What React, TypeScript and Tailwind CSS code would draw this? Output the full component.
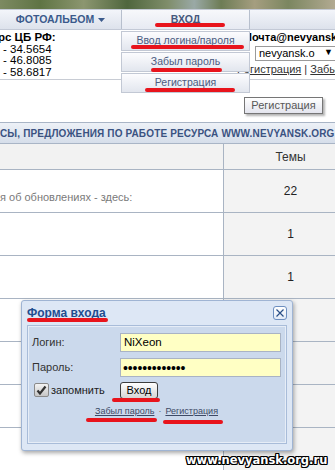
import React from "react";

const marks = [
  "left-[155px] top-[23px] w-[70px]",
  "left-[131px] top-[45px] w-[113px]",
  "left-[151px] top-[68px] w-[71px]",
  "left-[145px] top-[88px] w-[90px]",
  "left-[27px] top-[318px] w-[81px]",
  "left-[112px] top-[398px] w-[48px]",
  "left-[86px] top-[418px] w-[71px]",
  "left-[163px] top-[420px] w-[60px]",
];

const rows = [
  { note: "я об обновлениях - здесь:", count: "22" },
  { note: "", count: "1" },
  { note: "", count: "1" },
  { note: "", count: "" },
  { note: "", count: "" },
  { note: "", count: "" },
  { note: "", count: "" },
];

const Row = ({ note, count }: { note: string; count: string }) => (
  <div className="grid h-[43px] grid-cols-[223px_134px] border-b border-[#a9b4c3]">
    <div className="bg-white pt-[21px] text-[11px] leading-[13px] text-[#7a7a7a] whitespace-nowrap">{note}</div>
    <div className="flex items-center justify-center border-l border-[#a9b4c3] bg-[#f3f3f3] text-[12px] text-[#222]">
      {count}
    </div>
  </div>
);

export default function App() {
  return (
    <div className="relative h-[470px] w-[335px] overflow-hidden bg-white font-['Liberation_Sans',Arial,sans-serif] text-[11px] text-black">
      {/* photo strip */}
      <div className="h-[9px] bg-[linear-gradient(90deg,#7d8a62,#5f7444_12%,#8c9670_25%,#4f663d_38%,#7f8d6a_50%,#9aa9a6_58%,#6d7c55_66%,#a59e80_76%,#7b8660_86%,#b2aa92)]" />

      {/* nav */}
      <div className="flex h-[21px] border-y border-[#c3c9d6] bg-gradient-to-b from-[#f3f5fa] to-[#dde2ec]">
        <div className="flex w-[121px] shrink-0 items-center justify-center gap-[4px] text-[10.5px] font-bold text-[#3b5a8c]">
          ФОТОАЛЬБОМ
          <svg width="7" height="4" viewBox="0 0 7 4">
            <path d="M0 0h7L3.5 4z" fill="#3b5a8c" />
          </svg>
        </div>
        <div className="flex w-[129px] shrink-0 items-center justify-center border-x border-[#b7bfcd] bg-gradient-to-b from-[#f7f8fb] to-[#e7eaf2] text-[10.5px] font-bold text-[#46587c]">
          ВХОД
        </div>
        <div className="flex-1" />
      </div>

      {/* info row */}
      <div className="flex h-[50px] border-b border-[#c8ccd4]">
        <div className="w-[237px] shrink-0 pt-[2px] text-[11.5px] leading-[11.5px]">
          <div className="-ml-[2px] font-bold">рс ЦБ РФ:</div>
          <div className="pl-[3px]">- 34.5654</div>
          <div className="pl-[3px]">- 46.8085</div>
          <div className="pl-[3px]">- 58.6817</div>
        </div>
        <div className="min-w-0 flex-1 pt-[2px] whitespace-nowrap">
          <div className="ml-[7px] font-bold leading-[11.5px]">Почта@nevyansk.org.ru</div>
          <div className="ml-[18px] mt-[2px] flex h-[15px] w-[90px] items-center border border-[#9a9a9a] bg-white pl-[3px]">
            <span className="w-[56px] shrink-0 overflow-hidden">nevyansk.org.ru</span>
            <span className="ml-[9px] text-[9px]">▼</span>
          </div>
          <div className="mt-[3px] leading-[11px] text-[#333]">
            <span className="underline">Регистрация</span> | <span className="underline">Забыл пароль</span>
          </div>
        </div>
      </div>

      <div className="h-[42px]" />

      {/* section header */}
      <div className="flex h-[22px] items-center overflow-hidden whitespace-nowrap border-y border-[#a9b5c6] bg-gradient-to-b from-[#edf1f7] to-[#d6deea] text-[10px] font-bold tracking-[0.15px] text-[#3a5281]">
        СЫ, ПРЕДЛОЖЕНИЯ ПО РАБОТЕ РЕСУРСА WWW.NEVYANSK.ORG
      </div>

      {/* table */}
      <div className="w-[357px]">
        <div className="grid h-[26px] grid-cols-[223px_134px] border-b border-[#a9b4c3] bg-[#f2f2f2]">
          <div />
          <div className="flex items-center justify-center border-l border-[#a9b4c3] text-[12px] text-[#333]">Темы</div>
        </div>
        {rows.map((r, i) => (
          <Row key={i} note={r.note} count={r.count} />
        ))}
      </div>

      {/* dropdown menu */}
      <div className="absolute left-[121px] top-[31px] flex w-[129px] flex-col gap-px">
        {["Ввод логина/пароля", "Забыл пароль", "Регистрация"].map((t) => (
          <div
            key={t}
            className="flex h-[20px] items-center justify-center border border-[#c2c8d4] bg-gradient-to-b from-[#fcfcfe] to-[#e2e6ee] text-[10.5px] text-[#4b5b80]"
          >
            {t}
          </div>
        ))}
      </div>

      {/* tooltip */}
      <div className="absolute left-[244px] top-[97px] flex h-[17px] w-[79px] items-center justify-center border border-[#767676] bg-gradient-to-b from-white to-[#e4e5ee] text-[11px] text-[#575757] shadow-[2px_2px_2px_rgba(0,0,0,0.3)]">
        Регистрация
      </div>

      {/* login popup */}
      <div className="absolute left-[21px] top-[300px] flex h-[151px] w-[272px] flex-col rounded-[3px] border border-[#9fb4d3] bg-[#dde7f5] px-[5px] pb-[6px] shadow-[1px_2px_4px_rgba(0,0,0,0.35)]">
        <div className="flex h-[24px] items-center justify-between">
          <span className="text-[12px] font-bold text-[#1f4d8f]">Форма входа</span>
          <div className="flex h-[14px] w-[14px] items-center justify-center rounded-[3px] border border-[#6d8fc0] bg-gradient-to-b from-white to-[#e3ebf7]">
            <svg width="8" height="8" viewBox="0 0 8 8">
              <path d="M0.5 0.5L7.5 7.5M7.5 0.5L0.5 7.5" stroke="#2a4f87" strokeWidth="1.2" />
            </svg>
          </div>
        </div>
        <div className="flex flex-1 flex-col border border-[#a8bcd9] bg-[#cbd9ec] pl-[4px] pr-[5px] pt-[7px] shadow-[inset_0_0_0_1px_#e6edf7]">
          <div className="flex h-[19px] items-center">
            <span className="w-[88px] text-[#333]">Логин:</span>
            <div className="flex h-[19px] flex-1 items-center border border-[#a9b3c4] bg-[#ffffc4] pl-[3px] text-[11.5px]">NiXeon</div>
          </div>
          <div className="mt-[6px] flex h-[19px] items-center">
            <span className="w-[88px] text-[#333]">Пароль:</span>
            <div className="flex h-[19px] flex-1 items-center overflow-hidden border border-[#a9b3c4] bg-[#ffffc4] pl-[2px] text-[14px] leading-none tracking-[-0.1px]">
              •••••••••••••
            </div>
          </div>
          <div className="mt-[5px] flex h-[16px] items-center">
            <div className="ml-[2px] flex w-[86px] items-center gap-[2px]">
              <div className="flex h-[14px] w-[15px] items-center justify-center rounded-[2px] border border-[#8a8a8a] bg-gradient-to-b from-[#f4f4f4] to-[#c6c6c6]">
                <svg width="11" height="10" viewBox="0 0 11 10">
                  <path d="M1.5 5.5L4 8.5L9.5 1.5" fill="none" stroke="#333" strokeWidth="2.2" />
                </svg>
              </div>
              <span className="text-[#222]">запомнить</span>
            </div>
            <button className="flex h-[17px] w-[38px] items-center justify-center rounded-[3px] border border-[#3d3d3d] bg-gradient-to-b from-white to-[#d4d4d4] text-[11px] text-black">
              Вход
            </button>
          </div>
          <div className="mt-[7px] flex items-center justify-center gap-[4px] text-[9px] text-[#3d4a66]">
            <span className="underline">Забыл пароль</span>
            <span className="text-[#666]">·</span>
            <span className="underline">Регистрация</span>
          </div>
        </div>
      </div>

      {/* red annotation marks */}
      {marks.map((m) => (
        <span key={m} className={`absolute h-[4px] rounded-full bg-[#e8141c] ${m}`} />
      ))}

      {/* watermark */}
      <div className="absolute left-[186px] top-[455px] font-['DejaVu_Sans',sans-serif] text-[11.5px] font-bold leading-none text-white [text-shadow:1px_0_0_#000,-1px_0_0_#000,0_1px_0_#000,0_-1px_0_#000,1px_1px_0_#000,-1px_-1px_0_#000,1px_-1px_0_#000,-1px_1px_0_#000]">
        www.nevyansk.org.ru
      </div>
    </div>
  );
}
